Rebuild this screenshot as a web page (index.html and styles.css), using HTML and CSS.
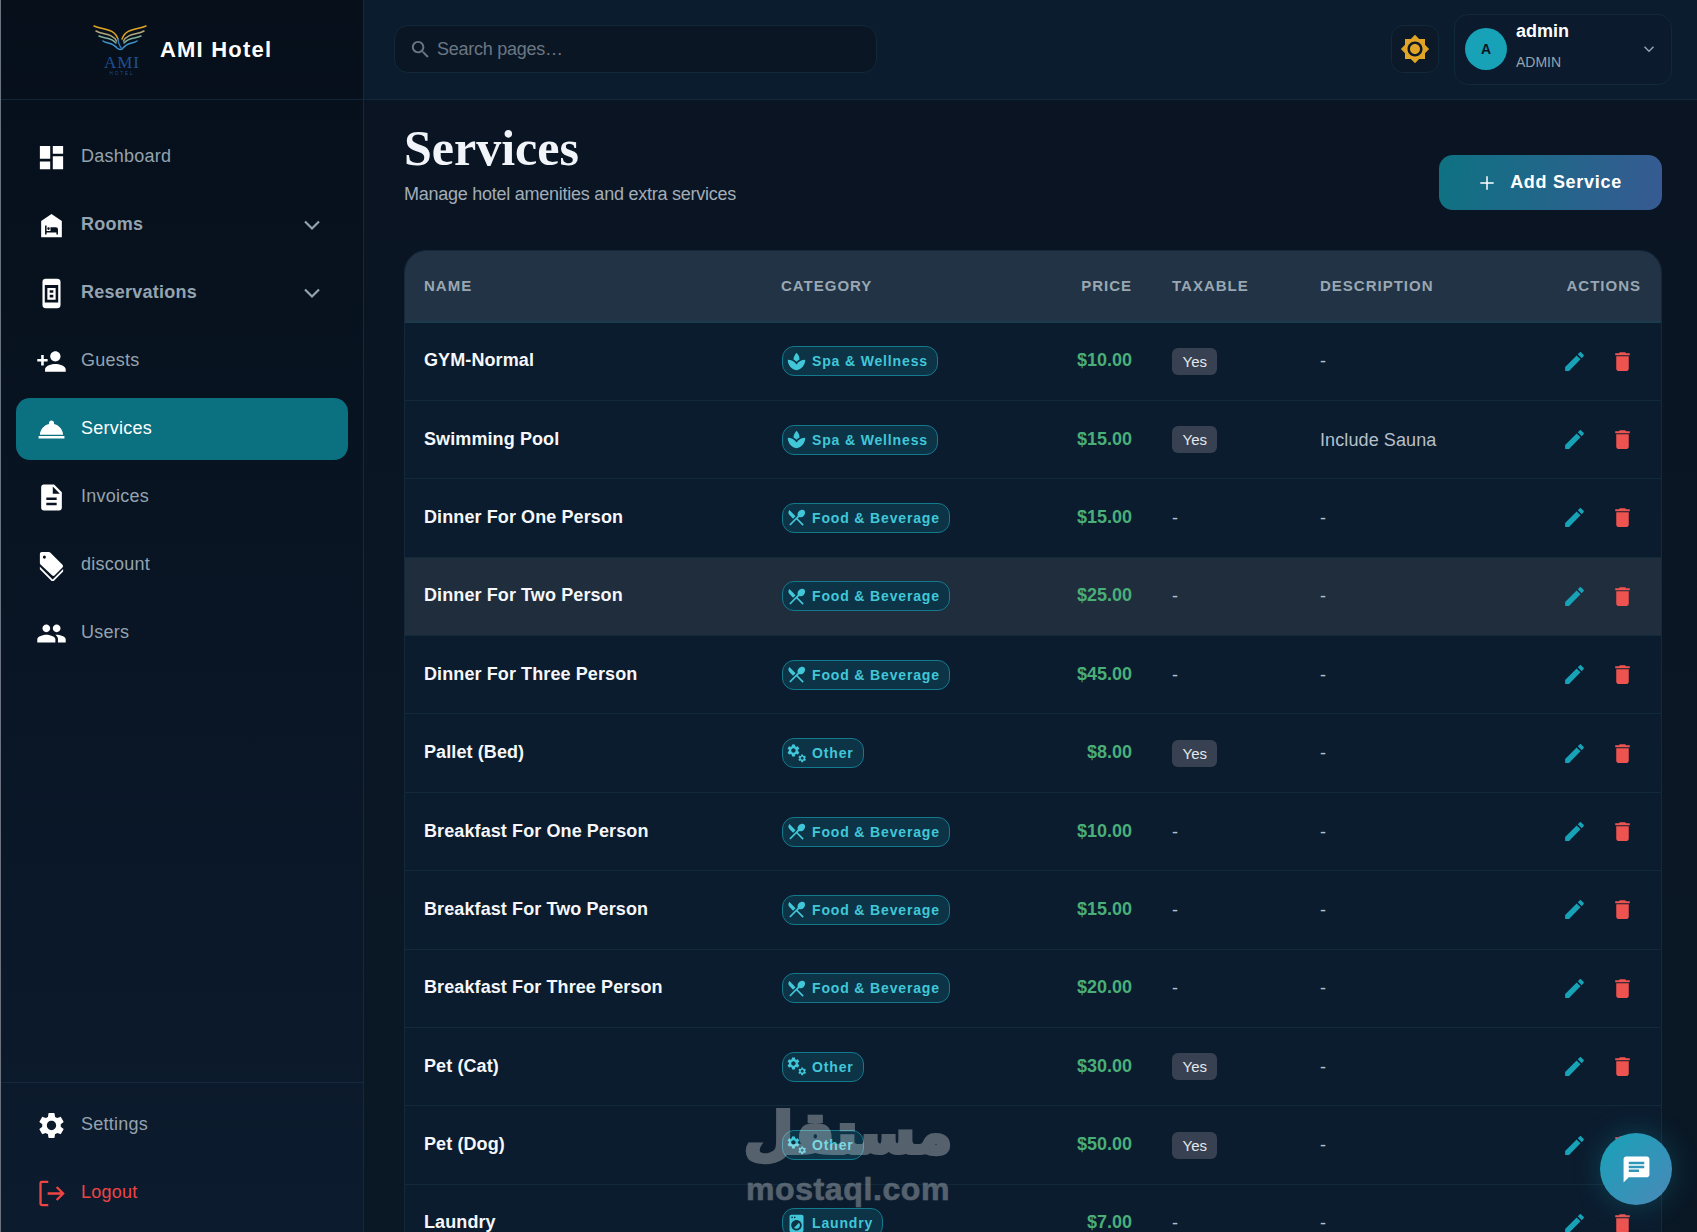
FILE: index.html
```html
<!DOCTYPE html>
<html lang="en">
<head>
<meta charset="utf-8">
<title>Services - AMI Hotel</title>
<link rel="stylesheet" href="styles.css">
</head>
<body>
<svg class="sprite" aria-hidden="true">
  <symbol id="i-dashboard" viewBox="0 0 24 24"><path d="M3 13h8V3H3v10zm0 8h8v-6H3v6zm10 0h8V11h-8v10zm0-18v6h8V3h-8z"/></symbol>
  <symbol id="i-rooms" viewBox="0 0 24 24"><path fill-rule="evenodd" d="M12 3l8 5.5V21H4V8.5zM7 12v7h1.2v-1.6h7.6V19H17v-4c0-1-.7-1.7-1.7-1.7h-4.1v2.9H8.2V12zM9.7 13.4a1 1 0 1 0 0 2 1 1 0 0 0 0-2z"/></symbol>
  <symbol id="i-reservations" viewBox="0 0 24 24"><path fill-rule="evenodd" d="M7.5.5h9C17.900.5 19 1.500 19 2.900v18.200c0 1.400-1.100 2.400-2.500 2.400h-9C6.100 23.500 5 22.500 5 21.100V2.900C5 1.500 6.100.5 7.500.5zM6.800 5.500v13.500h10.400V5.500zM8.800 7.800h6.400v9H8.800zM10.600 9.500v2h2.800v-2zM10.600 13v2h2.800v-2z"/></symbol>
  <symbol id="i-guests" viewBox="0 0 24 24"><path d="M15 12c2.210 0 4-1.790 4-4s-1.790-4-4-4-4 1.790-4 4 1.790 4 4 4zm-9-2V7H4v3H1v2h3v3h2v-3h3v-2H6zm9 4c-2.670 0-8 1.340-8 4v2h16v-2c0-2.660-5.330-4-8-4z"/></symbol>
  <symbol id="i-services" viewBox="0 0 24 24"><path d="M2 17h20v2H2zm11.840-9.210c.1-.24.16-.51.16-.79 0-1.100-.9-2-2-2s-2 .9-2 2c0 .28.06.55.16.79C6.250 8.600 3.270 11.930 3 16h18c-.27-4.070-3.250-7.400-7.160-8.210z"/></symbol>
  <symbol id="i-invoices" viewBox="0 0 24 24"><path d="M14 2H6c-1.100 0-1.990.9-1.990 2L4 20c0 1.100.89 2 1.990 2H18c1.100 0 2-.9 2-2V8l-6-6zm2 16H8v-2h8v2zm0-4H8v-2h8v2zm-3-5V3.500L18.500 9H13z"/></symbol>
  <symbol id="i-discount" viewBox="0 0 24 24"><path fill-rule="evenodd" d="M4.500 1.500h5.300c.5 0 .9.2 1.200.5l9.500 9.500c.6.6.6 1.500 0 2.100l-6 6c-.6.6-1.500.6-2.100 0L3.500 11.200c-.4-.4-.5-.8-.5-1.200V3c0-.8.7-1.500 1.500-1.500zM6.500 4.300a1.200 1.200 0 1 0 0 2.400 1.200 1.200 0 0 0 0-2.400z"/><path d="M3 12.900l9.900 9.900 8.100-8.100v2L12.900 24.800 3 14.900z"/></symbol>
  <symbol id="i-users" viewBox="0 0 24 24"><path d="M16 11c1.660 0 2.990-1.340 2.990-3S17.660 5 16 5c-1.660 0-3 1.340-3 3s1.340 3 3 3zm-8 0c1.660 0 2.990-1.340 2.990-3S9.660 5 8 5C6.340 5 5 6.340 5 8s1.340 3 3 3zm0 2c-2.330 0-7 1.170-7 3.500V19h14v-2.500c0-2.330-4.670-3.500-7-3.500zm8 0c-.29 0-.62.02-.97.05 1.160.84 1.970 1.970 1.970 3.450V19h6v-2.500c0-2.330-4.670-3.500-7-3.500z"/></symbol>
  <symbol id="i-gear" viewBox="0 0 24 24"><path d="M19.140 12.940c.04-.3.06-.61.06-.94 0-.32-.02-.64-.07-.94l2.030-1.580c.18-.14.23-.41.12-.61l-1.920-3.320c-.12-.22-.37-.29-.59-.22l-2.390.96c-.5-.38-1.030-.7-1.620-.94l-.36-2.540c-.04-.24-.24-.41-.48-.41h-3.840c-.24 0-.43.17-.47.41l-.36 2.540c-.59.24-1.130.57-1.620.94l-2.390-.96c-.22-.08-.47 0-.59.22L2.740 8.870c-.12.21-.08.47.12.61l2.030 1.580c-.05.3-.09.63-.09.94s.02.64.07.94l-2.030 1.580c-.18.14-.23.41-.12.61l1.920 3.320c.12.22.37.29.59.22l2.390-.96c.5.38 1.030.7 1.620.94l.36 2.540c.05.24.24.41.48.41h3.840c.24 0 .44-.17.47-.41l.36-2.540c.59-.24 1.130-.56 1.620-.94l2.390.96c.22.08.47 0 .59-.22l1.920-3.320c.12-.22.07-.47-.12-.61l-2.010-1.580zM12 15.600c-1.980 0-3.600-1.620-3.600-3.600s1.620-3.600 3.600-3.600 3.600 1.620 3.600 3.600-1.620 3.600-3.600 3.600z"/></symbol>
  <symbol id="i-search" viewBox="0 0 24 24"><path d="M15.500 14h-.79l-.28-.27C15.410 12.590 16 11.110 16 9.500 16 5.910 13.090 3 9.500 3S3 5.910 3 9.500 5.910 16 9.500 16c1.610 0 3.090-.59 4.230-1.570l.27.28v.79l5 4.990L20.490 19l-4.990-5zm-6 0C7.010 14 5 11.990 5 9.500S7.010 5 9.500 5 14 7.010 14 9.500 11.990 14 9.500 14z"/></symbol>
  <symbol id="i-sun" viewBox="0 0 24 24"><path d="M20 8.690V4h-4.690L12 .69 8.690 4H4v4.690L.69 12 4 15.310V20h4.690L12 23.310 15.310 20H20v-4.690L23.310 12 20 8.690zM12 18c-3.310 0-6-2.690-6-6s2.690-6 6-6 6 2.690 6 6-2.690 6-6 6zm0-10c-2.210 0-4 1.790-4 4s1.790 4 4 4 4-1.790 4-4-1.790-4-4-4z"/></symbol>
  <symbol id="i-spa" viewBox="0 0 24 24"><path d="M15.490 9.630c-.18-2.790-1.310-5.510-3.430-7.630-2.140 2.140-3.320 4.860-3.550 7.630 1.280.68 2.460 1.560 3.490 2.630 1.030-1.060 2.210-1.940 3.490-2.630zM12 15.450C9.850 12.170 6.180 10 2 10c0 5.320 3.360 9.820 8.030 11.490.63.23 1.290.4 1.970.51.68-.12 1.330-.29 1.970-.51C18.640 19.820 22 15.320 22 10c-4.180 0-7.850 2.170-10 5.450z"/></symbol>
  <symbol id="i-food" viewBox="0 0 24 24"><path d="M8.100 13.340l2.830-2.830L3.910 3.500c-1.560 1.560-1.560 4.090 0 5.660l4.190 4.180zm6.780-1.810c1.530.71 3.680.21 5.270-1.380 1.910-1.910 2.280-4.650.81-6.120-1.460-1.460-4.200-1.100-6.120.81-1.590 1.590-2.090 3.740-1.380 5.270L3.700 19.870l1.410 1.410L12 14.410l6.880 6.880 1.410-1.410L13.410 13l1.470-1.470z"/></symbol>
  <symbol id="i-other" viewBox="0 0 24 24"><use href="#i-gear" x="0" y="0" width="17" height="17"/><use href="#i-gear" x="13" y="12" width="11" height="11"/></symbol>
  <symbol id="i-laundry" viewBox="0 0 24 24"><path d="M9.170 16.830c1.560 1.560 4.100 1.560 5.660 0 1.560-1.560 1.560-4.100 0-5.660l-5.660 5.660zM18 2.010L6 2c-1.110 0-2 .89-2 2v16c0 1.110.89 2 2 2h12c1.110 0 2-.89 2-2V4c0-1.110-.89-1.990-2-1.990zM10 4c.55 0 1 .45 1 1s-.45 1-1 1-1-.45-1-1 .45-1 1-1zM7 4c.55 0 1 .45 1 1s-.45 1-1 1-1-.45-1-1 .45-1 1-1zm5 16c-3.310 0-6-2.690-6-6s2.690-6 6-6 6 2.690 6 6-2.690 6-6 6z"/></symbol>
  <symbol id="i-edit" viewBox="0 0 24 24"><path d="M3 17.250V21h3.750L17.810 9.940l-3.750-3.750L3 17.250zM20.710 7.040c.39-.39.39-1.020 0-1.410l-2.340-2.340c-.39-.39-1.020-.39-1.410 0l-1.830 1.830 3.750 3.750 1.830-1.830z"/></symbol>
  <symbol id="i-delete" viewBox="0 0 24 24"><path d="M6 19c0 1.100.9 2 2 2h8c1.100 0 2-.9 2-2V7H6v12zM19 4h-3.500l-1-1h-5l-1 1H5v2h14V4z"/></symbol>
  <symbol id="i-chat" viewBox="0 0 24 24"><path d="M20 2H4c-1.100 0-1.990.9-1.990 2L2 22l4-4h14c1.100 0 2-.9 2-2V4c0-1.100-.9-2-2-2zM6 9h12v2H6V9zm8 5H6v-2h8v2zm4-6H6V6h12v2z"/></symbol>
</svg>

<div class="app">
  <aside class="sidebar">
    <div class="brand">
      <svg class="brand-logo" viewBox="0 0 54 52" width="54" height="52">
        <g fill="none" stroke-width="1.500" stroke-linecap="round">
          <path stroke="#e0a526" d="M1 1C10 5 21 3 25 14"/>
          <path stroke="#e0a526" d="M53 1C44 5 33 3 29 14"/>
          <path stroke="#b3a77c" d="M3 6C10 10 19 8 23.500 16"/>
          <path stroke="#b3a77c" d="M51 6C44 10 35 8 30.500 16"/>
          <path stroke="#7fae9c" d="M6 11C12 14 18 12 23 18"/>
          <path stroke="#7fae9c" d="M48 11C42 14 36 12 31 18"/>
          <path stroke="#3f94cc" d="M10 16C14 19 19 17 24 23C26 25 29 25 30 23C35 17 40 19 44 16"/>
          <path stroke="#2e79b8" d="M25 14C25 19 27 21 28 23"/>
        </g>
        <text class="brand-ami" x="29" y="43" text-anchor="middle">AMI</text>
        <text class="brand-hotel" x="29" y="50" text-anchor="middle">HOTEL</text>
      </svg>
      <span class="brand-name">AMI Hotel</span>
    </div>
    <nav class="nav">
      <a class="nav-item"><svg class="nav-icon"><use href="#i-dashboard"/></svg><span>Dashboard</span></a>
      <a class="nav-item nav-group"><svg class="nav-icon"><use href="#i-rooms"/></svg><span>Rooms</span><svg class="nav-chevron" viewBox="0 0 24 24"><path d="M5 8.500l7 7 7-7"/></svg></a>
      <a class="nav-item nav-group"><svg class="nav-icon"><use href="#i-reservations"/></svg><span>Reservations</span><svg class="nav-chevron" viewBox="0 0 24 24"><path d="M5 8.500l7 7 7-7"/></svg></a>
      <a class="nav-item"><svg class="nav-icon"><use href="#i-guests"/></svg><span>Guests</span></a>
      <a class="nav-item is-active"><svg class="nav-icon"><use href="#i-services"/></svg><span>Services</span></a>
      <a class="nav-item"><svg class="nav-icon"><use href="#i-invoices"/></svg><span>Invoices</span></a>
      <a class="nav-item"><svg class="nav-icon"><use href="#i-discount"/></svg><span>discount</span></a>
      <a class="nav-item"><svg class="nav-icon"><use href="#i-users"/></svg><span>Users</span></a>
    </nav>
    <div class="nav-bottom">
      <a class="nav-item"><svg class="nav-icon"><use href="#i-gear"/></svg><span>Settings</span></a>
      <a class="nav-item is-logout"><svg class="nav-icon logout-icon" viewBox="0 0 24 24"><path d="M9.500 3H4.500a1 1 0 0 0-1 1v16a1 1 0 0 0 1 1h5M9 12h12M16 7l5 5-5 5"/></svg><span>Logout</span></a>
    </div>
  </aside>

  <div class="main">
    <header class="topbar">
      <div class="search"><svg class="search-icon"><use href="#i-search"/></svg><span>Search pages…</span></div>
      <div class="topbar-right">
        <button class="theme-btn"><svg class="sun-icon"><use href="#i-sun"/></svg></button>
        <div class="user">
          <span class="avatar">A</span>
          <span class="user-text"><strong>admin</strong><small>ADMIN</small></span>
          <svg class="user-chevron" viewBox="0 0 24 24"><path d="M6 9l6 6 6-6"/></svg>
        </div>
      </div>
    </header>

    <main class="content">
      <div class="page-head">
        <div class="page-title">
          <h1>Services</h1>
          <p>Manage hotel amenities and extra services</p>
        </div>
        <button class="add-btn"><svg class="add-icon" viewBox="0 0 24 24"><path d="M12 4v16M4 12h16"/></svg>Add Service</button>
      </div>

      <div class="card">
        <table>
          <colgroup><col class="c-name"><col class="c-cat"><col class="c-price"><col class="c-tax"><col class="c-desc"><col class="c-act"></colgroup>
          <thead>
            <tr><th>Name</th><th>Category</th><th class="right">Price</th><th>Taxable</th><th>Description</th><th class="right">Actions</th></tr>
          </thead>
          <tbody>
            <tr><td class="name">GYM-Normal</td><td><span class="badge"><svg><use href="#i-spa"/></svg>Spa &amp; Wellness</span></td><td class="price">$10.00</td><td><span class="yes">Yes</span></td><td class="muted">-</td><td class="actions"><svg class="edit"><use href="#i-edit"/></svg><svg class="del"><use href="#i-delete"/></svg></td></tr>
            <tr><td class="name">Swimming Pool</td><td><span class="badge"><svg><use href="#i-spa"/></svg>Spa &amp; Wellness</span></td><td class="price">$15.00</td><td><span class="yes">Yes</span></td><td class="muted">Include Sauna</td><td class="actions"><svg class="edit"><use href="#i-edit"/></svg><svg class="del"><use href="#i-delete"/></svg></td></tr>
            <tr><td class="name">Dinner For One Person</td><td><span class="badge"><svg><use href="#i-food"/></svg>Food &amp; Beverage</span></td><td class="price">$15.00</td><td class="muted">-</td><td class="muted">-</td><td class="actions"><svg class="edit"><use href="#i-edit"/></svg><svg class="del"><use href="#i-delete"/></svg></td></tr>
            <tr class="is-hover"><td class="name">Dinner For Two Person</td><td><span class="badge"><svg><use href="#i-food"/></svg>Food &amp; Beverage</span></td><td class="price">$25.00</td><td class="muted">-</td><td class="muted">-</td><td class="actions"><svg class="edit"><use href="#i-edit"/></svg><svg class="del"><use href="#i-delete"/></svg></td></tr>
            <tr><td class="name">Dinner For Three Person</td><td><span class="badge"><svg><use href="#i-food"/></svg>Food &amp; Beverage</span></td><td class="price">$45.00</td><td class="muted">-</td><td class="muted">-</td><td class="actions"><svg class="edit"><use href="#i-edit"/></svg><svg class="del"><use href="#i-delete"/></svg></td></tr>
            <tr><td class="name">Pallet (Bed)</td><td><span class="badge"><svg><use href="#i-other"/></svg>Other</span></td><td class="price">$8.00</td><td><span class="yes">Yes</span></td><td class="muted">-</td><td class="actions"><svg class="edit"><use href="#i-edit"/></svg><svg class="del"><use href="#i-delete"/></svg></td></tr>
            <tr><td class="name">Breakfast For One Person</td><td><span class="badge"><svg><use href="#i-food"/></svg>Food &amp; Beverage</span></td><td class="price">$10.00</td><td class="muted">-</td><td class="muted">-</td><td class="actions"><svg class="edit"><use href="#i-edit"/></svg><svg class="del"><use href="#i-delete"/></svg></td></tr>
            <tr><td class="name">Breakfast For Two Person</td><td><span class="badge"><svg><use href="#i-food"/></svg>Food &amp; Beverage</span></td><td class="price">$15.00</td><td class="muted">-</td><td class="muted">-</td><td class="actions"><svg class="edit"><use href="#i-edit"/></svg><svg class="del"><use href="#i-delete"/></svg></td></tr>
            <tr><td class="name">Breakfast For Three Person</td><td><span class="badge"><svg><use href="#i-food"/></svg>Food &amp; Beverage</span></td><td class="price">$20.00</td><td class="muted">-</td><td class="muted">-</td><td class="actions"><svg class="edit"><use href="#i-edit"/></svg><svg class="del"><use href="#i-delete"/></svg></td></tr>
            <tr><td class="name">Pet (Cat)</td><td><span class="badge"><svg><use href="#i-other"/></svg>Other</span></td><td class="price">$30.00</td><td><span class="yes">Yes</span></td><td class="muted">-</td><td class="actions"><svg class="edit"><use href="#i-edit"/></svg><svg class="del"><use href="#i-delete"/></svg></td></tr>
            <tr><td class="name">Pet (Dog)</td><td><span class="badge"><svg><use href="#i-other"/></svg>Other</span></td><td class="price">$50.00</td><td><span class="yes">Yes</span></td><td class="muted">-</td><td class="actions"><svg class="edit"><use href="#i-edit"/></svg><svg class="del"><use href="#i-delete"/></svg></td></tr>
            <tr><td class="name">Laundry</td><td><span class="badge"><svg><use href="#i-laundry"/></svg>Laundry</span></td><td class="price">$7.00</td><td class="muted">-</td><td class="muted">-</td><td class="actions"><svg class="edit"><use href="#i-edit"/></svg><svg class="del"><use href="#i-delete"/></svg></td></tr>
          </tbody>
        </table>
      </div>
    </main>
  </div>
</div>

<div class="watermark"><span class="wm-ar" lang="ar" dir="rtl">مستقل</span><span class="wm-en">mostaql.com</span></div>
<button class="chat"><svg><use href="#i-chat"/></svg></button>
</body>
</html>
```
FILE: styles.css
```css
* { box-sizing: border-box; }
html, body { height: 100%; }
body {
  margin: 0;
  overflow: hidden;
  background: #0a1522;
  color: #fff;
  font-family: "Liberation Sans", Arial, sans-serif;
}
.sprite { display: none; }
svg { fill: currentColor; }

.app { display: flex; height: 1232px; overflow: hidden; }

/* Sidebar */
.sidebar {
  flex: 0 0 364px;
  display: flex;
  flex-direction: column;
  border-left: 1px solid #6b7280;
  border-right: 1px solid #142a3c;
  background: linear-gradient(180deg, #060f1a 0%, #0c1b2e 100%);
}
.brand {
  height: 100px;
  flex: none;
  display: flex;
  align-items: center;
  padding-left: 92px;
  gap: 13px;
  border-bottom: 1px solid #12263a;
}
.brand-logo { flex: none; margin-top: 2px; }
.brand-ami { font-family: "Liberation Serif", serif; font-size: 17px; fill: #1f4f94; letter-spacing: 1px; }
.brand-hotel { font-family: "Liberation Sans", sans-serif; font-size: 4.500px; fill: #1f4f94; letter-spacing: 2px; }
.brand-name { font-size: 22px; font-weight: 700; letter-spacing: 1.200px; }

.nav { flex: 1; display: flex; flex-direction: column; gap: 6px; padding: 26px 15px 0; }
.nav-item {
  height: 62px;
  display: flex;
  align-items: center;
  padding: 0 20px 0 20px;
  gap: 14px;
  border-radius: 14px;
  font-size: 18px;
  letter-spacing: .25px;
  color: #94a3b0;
}
.nav-group { font-weight: 700; }
.nav-item span { position: relative; top: -1px; }
.nav-icon { width: 31px; height: 31px; color: #fff; flex: none; }
.nav-chevron { width: 24px; height: 24px; margin-left: auto; margin-right: 4px; fill: none; stroke: #94a3b0; stroke-width: 2.200; }
.is-active { background: #0b7080; color: #fff; }
.nav-bottom { display: flex; flex-direction: column; gap: 6px; padding: 11px 15px 8px; border-top: 1px solid #142a3c; }
.is-logout { color: #ef4444; }
.logout-icon { fill: none; stroke: #ef4444; stroke-width: 1.800; }

/* Main */
.main {
  flex: 1;
  min-width: 0;
  display: flex;
  flex-direction: column;
  background: linear-gradient(180deg, #0a1422 0%, #0a1826 100%);
}
.topbar {
  height: 100px;
  flex: none;
  display: flex;
  align-items: center;
  justify-content: space-between;
  padding: 0 25px 1px 30px;
  background: #0b1c2e;
  border-bottom: 1px solid #12293a;
}
.search {
  width: 483px;
  height: 48px;
  display: flex;
  align-items: center;
  gap: 5px;
  padding: 0 14px;
  background: #0a1624;
  border: 1px solid #11293a;
  border-radius: 14px;
  font-size: 18px;
  letter-spacing: -.25px;
  color: #6b7683;
}
.search-icon { width: 23px; height: 23px; color: #6b7683; flex: none; }
.topbar-right { display: flex; align-items: center; gap: 15px; }
.theme-btn {
  width: 48px;
  height: 48px;
  display: flex;
  align-items: center;
  justify-content: center;
  padding: 0;
  background: #0b1928;
  border: 1px solid #11293a;
  border-radius: 12px;
}
.sun-icon { width: 30px; height: 30px; color: #e0a526; }
.user {
  width: 218px;
  height: 71px;
  display: flex;
  align-items: center;
  padding: 0 13px 0 10px;
  background: #0b1a2c;
  border: 1px solid #11293a;
  border-radius: 14px;
}
.avatar {
  width: 42px;
  height: 42px;
  flex: none;
  display: flex;
  align-items: center;
  justify-content: center;
  border-radius: 50%;
  background: #17a2b8;
  color: #0a1422;
  font-size: 14px;
  font-weight: 700;
}
.user-text { display: flex; flex-direction: column; margin: 0 0 8px 9px; line-height: 1; }
.user-text strong { font-size: 18px; }
.user-text small { font-size: 14px; color: #94a3b0; margin-top: 15px; }
.user-chevron { width: 18px; height: 18px; margin-left: auto; fill: none; stroke: #94a3b0; stroke-width: 2; }

.content { padding: 24px 35px 0 40px; flex: 1; min-height: 0; }
.page-head { display: flex; justify-content: space-between; align-items: flex-end; margin-bottom: 40px; }
.page-title { padding-bottom: 5px; }
.page-head h1 { margin: 0; font-family: "Liberation Serif", serif; font-weight: 700; font-size: 50px; line-height: 48px; color: #f1f5f9; }
.page-head p { margin: 11px 0 0; font-size: 18px; line-height: 22px; color: #a3adb8; letter-spacing: -.25px; }
.add-btn {
  width: 223px;
  height: 55px;
  display: flex;
  align-items: center;
  justify-content: center;
  gap: 13px;
  padding: 0 2px 0 0;
  border: 0;
  border-radius: 14px;
  background: linear-gradient(100deg, #0e7282, #375a92);
  color: #fff;
  font: 700 18px "Liberation Sans", sans-serif;
  letter-spacing: .7px;
}
.add-icon { width: 20px; height: 20px; fill: none; stroke: #fff; stroke-width: 1.800; }

/* Table */
.card {
  border: 1px solid #142a3c;
  border-radius: 22px;
  overflow: hidden;
  background: #0b1c2e;
}
table { width: 100%; border-collapse: collapse; table-layout: fixed; }
.c-name { width: 356px; }
.c-cat { width: 241px; }
.c-price { width: 150px; }
.c-tax { width: 148px; }
.c-desc { width: 200px; }
th {
  height: 71px;
  padding: 0 20px 2px;
  background: #213344;
  border-bottom: 2px solid #1b3a4c;
  color: #9aa7b3;
  font-size: 15px;
  font-weight: 700;
  letter-spacing: 1px;
  text-align: left;
  text-transform: uppercase;
}
th:first-child { padding-left: 19px; }
th.right { text-align: right; }
td {
  height: 78.400px;
  padding: 0 20px;
  border-bottom: 1px solid #12293a;
  font-size: 18px;
  vertical-align: middle;
}
.is-hover td { background: #1f2d3d; }
.name { font-weight: 700; color: #f5f7fa; letter-spacing: .1px; padding: 0 20px 1px 19px; }
.price { font-weight: 700; color: #4aae78; text-align: right; padding-bottom: 1px; }
.muted { color: #b6c0ca; letter-spacing: .1px; padding-top: 1px; }
.badge {
  display: inline-flex;
  align-items: center;
  gap: 5px;
  height: 30px;
  margin-left: 1px;
  padding: 0 9px 0 3px;
  background: #0d3347;
  border: 1.500px solid #137a8e;
  border-radius: 12px;
  color: #41c7d8;
  font-size: 14px;
  font-weight: 700;
  letter-spacing: .85px;
  vertical-align: middle;
}
.badge svg { width: 21px; height: 21px; flex: none; }
.yes {
  display: inline-flex;
  align-items: center;
  height: 27px;
  padding: 0 10.500px;
  background: #374151;
  border-radius: 6px;
  color: #e5e7eb;
  font-size: 15px;
  vertical-align: middle;
}
.actions { text-align: right; white-space: nowrap; padding-right: 26px; }
.actions svg { width: 25px; height: 25px; vertical-align: middle; }
.edit { color: #17a2b8; }
.del { color: #ef5350; margin-left: 23px; }

/* Overlays */
.watermark {
  position: absolute;
  left: 746px;
  top: 1094px;
  width: 204px;
  display: flex;
  flex-direction: column;
  align-items: center;
  color: #fff;
  opacity: .3;
  pointer-events: none;
}
.wm-ar { font-family: "DejaVu Sans", sans-serif; font-weight: 700; font-size: 57px; line-height: 78px; white-space: nowrap; -webkit-text-stroke: 4px #fff; }
.wm-en { font-weight: 700; font-size: 32px; line-height: 34px; letter-spacing: .6px; -webkit-text-stroke: .6px #fff; }
.chat {
  position: absolute;
  left: 1600px;
  top: 1133px;
  width: 72px;
  height: 72px;
  display: flex;
  align-items: center;
  justify-content: center;
  padding: 0;
  border: 0;
  border-radius: 50%;
  background: linear-gradient(135deg, #17a2b8, #4a88b8);
  box-shadow: 0 0 28px rgba(23, 162, 184, .28);
  color: #fff;
}
.chat svg { width: 31px; height: 31px; }
```
